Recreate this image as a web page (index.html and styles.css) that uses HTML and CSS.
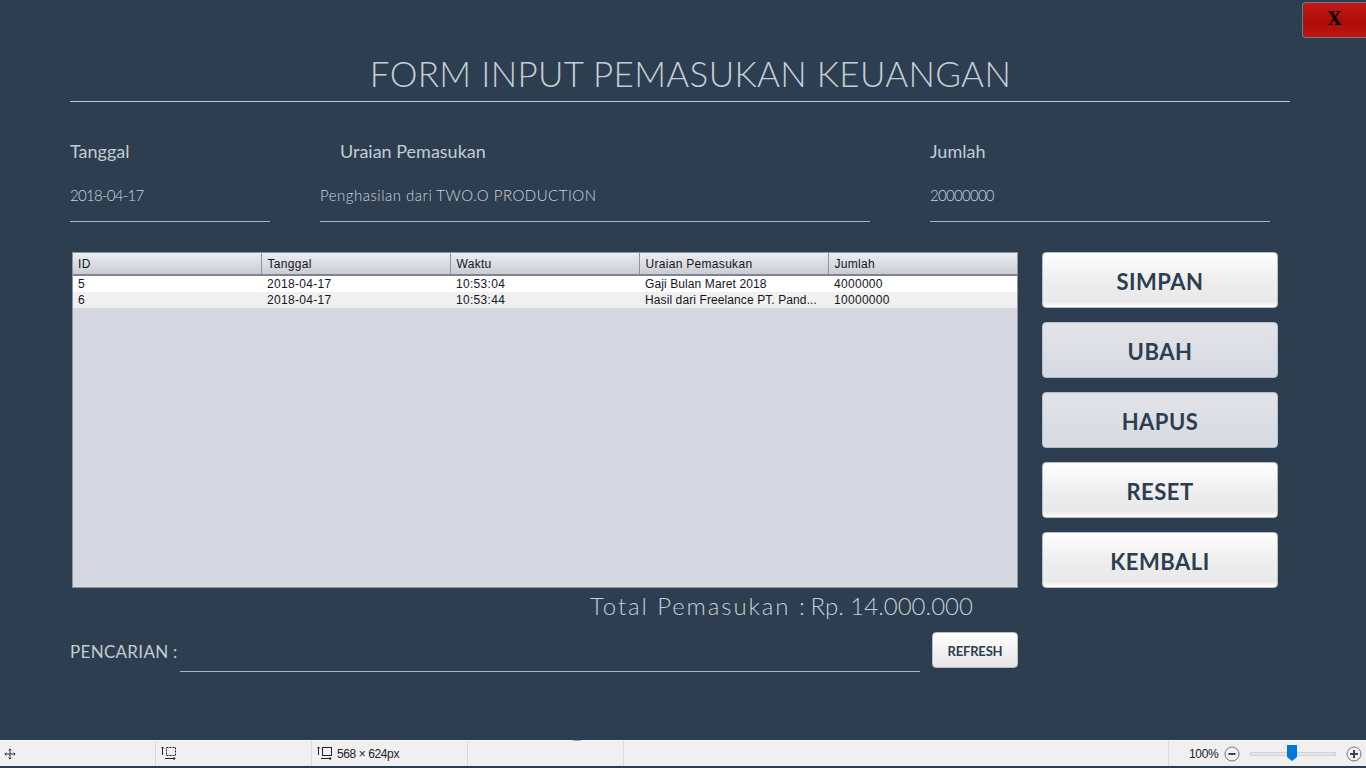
FILE: index.html
```html
<!doctype html>
<html>
<head>
<meta charset="utf-8">
<link rel="stylesheet" href="styles.css">
<title>Form Input Pemasukan Keuangan</title>
</head>
<body>
<div class="form">
    <div class="topbar"><button class="close">X</button></div>
    <h1 class="title">FORM INPUT PEMASUKAN KEUANGAN</h1>

    <div class="fields">
        <div class="field">
            <div class="label">Tanggal</div>
            <div class="value value-num">2018-04-17</div>
        </div>
        <div class="field field-mid">
            <div class="label label-indent">Uraian Pemasukan</div>
            <div class="value value-text">Penghasilan dari TWO.O PRODUCTION</div>
        </div>
        <div class="field">
            <div class="label">Jumlah</div>
            <div class="value value-num">20000000</div>
        </div>
    </div>

    <div class="main">
        <div class="table-box">
            <table class="grid">
                <thead>
                    <tr><th>ID</th><th>Tanggal</th><th>Waktu</th><th>Uraian Pemasukan</th><th>Jumlah</th></tr>
                </thead>
                <tbody>
                    <tr><td>5</td><td>2018-04-17</td><td>10:53:04</td><td>Gaji Bulan Maret 2018</td><td>4000000</td></tr>
                    <tr class="alt"><td>6</td><td>2018-04-17</td><td>10:53:44</td><td>Hasil dari Freelance PT. Pand...</td><td>10000000</td></tr>
                </tbody>
            </table>
        </div>
        <div class="actions">
            <button class="btn">SIMPAN</button>
            <button class="btn btn-hover">UBAH</button>
            <button class="btn btn-hover">HAPUS</button>
            <button class="btn">RESET</button>
            <button class="btn">KEMBALI</button>
        </div>
    </div>

    <div class="total">Total Pemasukan :<span class="total-value">Rp. 14.000.000</span></div>

    <div class="search">
        <div class="search-label">PENCARIAN :</div>
        <div class="search-input"></div>
        <button class="refresh">REFRESH</button>
    </div>
</div>

<div class="status">
    <div class="cell cell-move">
        <svg width="12" height="12" viewBox="0 0 13 13" fill="none" stroke="#222"><path d="M6.500 1v11M1 6.500h11M5 2.500l1.500-1.500 1.500 1.500M5 10.500l1.500 1.500 1.500-1.500M2.500 5l-1.500 1.500 1.500 1.500M10.500 5l1.500 1.500-1.500 1.500"/></svg>
    </div>
    <div class="cell">
        <svg width="16" height="15" viewBox="0 0 16 15" fill="none" stroke="#222"><path d="M1.500 1v8M0 2.500l1.500-1.500 1.500 1.500M4 12.500h10M12.500 11l1.500 1.500-1.500 1.500"/><rect x="5.500" y="1.500" width="9" height="8" stroke-dasharray="2 1"/></svg>
    </div>
    <div class="cell">
        <svg width="16" height="15" viewBox="0 0 16 15" fill="none" stroke="#222"><path d="M1.500 1v8M0 2.500l1.500-1.500 1.500 1.500M4 12.500h10M12.500 11l1.500 1.500-1.500 1.500"/><rect x="5.500" y="1.500" width="9" height="8"/></svg>
        <span class="dim">568 × 624px</span>
    </div>
    <div class="cell cell-mark"></div>
    <div class="cell cell-spacer"></div>
    <div class="zoom">
        <span class="zoom-num">100%</span>
        <svg width="16" height="16" viewBox="0 0 16 16" fill="none" stroke="#777"><circle cx="8" cy="8" r="7"/><path d="M4.500 8h7" stroke="#444" stroke-width="2"/></svg>
        <div class="slider"><svg class="thumb" width="10" height="16" viewBox="0 0 10 16"><path d="M0 0h10v12l-5 4-5-4z" fill="#0078d7"/></svg></div>
        <svg width="16" height="16" viewBox="0 0 16 16" fill="none" stroke="#777"><circle cx="8" cy="8" r="7"/><path d="M4 8h8M8 4v8" stroke="#444" stroke-width="2"/></svg>
    </div>
</div>
</body>
</html>
```

FILE: styles.css
```css
* {
    box-sizing: border-box;
}
body {
    margin: 0;
    width: 1366px;
    height: 768px;
    overflow: hidden;
    background-color: #2d3e50;
    font-family: "Lato", "Liberation Sans", sans-serif;
    color: #bcc6cf;
}
button {
    font-family: "Lato", "Liberation Sans", sans-serif;
    cursor: pointer;
}

.form {
    height: 740px;
    padding: 2px 0 0 70px;
}
.topbar {
    display: flex;
    justify-content: flex-end;
    height: 36px;
}
.close {
    width: 64px;
    height: 36px;
    padding: 0 0 3px;
    border: 1px solid #6c7a86;
    border-right: 0;
    border-radius: 4px 0 0 4px;
    background: linear-gradient(#c41814, #ad0d0a 55%, #c01512);
    font-family: "DejaVu Serif", serif;
    font-size: 18px;
    font-weight: bold;
    color: #0c0505;
}

.title {
    width: 1220px;
    height: 64px;
    margin: 0;
    padding: 11px 0 0 21px;
    border-bottom: 1px solid #bcc6cf;
    font-size: 35px;
    font-weight: 300;
    line-height: 48px;
    letter-spacing: 0.32px;
    text-align: center;
    color: #c5ced6;
}

.fields {
    display: grid;
    grid-template-columns: 200px 560px 340px;
    column-gap: 50px;
    margin-top: 34px;
}
.field-mid {
    margin-right: 10px;
}
.label {
    height: 31px;
    font-size: 18px;
    line-height: 30px;
    color: #c3ccd4;
}
.label-indent {
    padding-left: 20px;
}
.value {
    height: 55px;
    padding-top: 16px;
    border-bottom: 1px solid #aab4be;
    font-size: 15px;
    font-weight: 300;
    line-height: 24px;
    color: #ccd5dc;
}
.value-num {
    letter-spacing: -0.72px;
}
.value-text {
    letter-spacing: 0.5px;
}

.main {
    display: flex;
    margin: 30px 0 0 2px;
}
.table-box {
    width: 946px;
    height: 336px;
    border: 1px solid #8d95a1;
    background-color: #d5d8e1;
}
.grid {
    width: 944px;
    table-layout: fixed;
    border-collapse: collapse;
    font-family: "Liberation Sans", Arial, sans-serif;
    font-size: 12px;
    letter-spacing: 0.3px;
    color: #14141e;
}
.grid th {
    width: 189px;
    height: 22px;
    padding: 0 5px 0 6px;
    border-right: 1px solid #8d95a1;
    border-bottom: 2px solid #7f8590;
    background: linear-gradient(#eceef1, #d3d6dd 70%, #c9ccd4);
    font-weight: normal;
    text-align: left;
}
.grid th:first-child {
    width: 188px;
    padding-left: 5px;
}
.grid td {
    height: 16px;
    padding: 0 5px 0 6px;
    background-color: #fff;
    line-height: 16px;
    white-space: nowrap;
}
.grid td:first-child {
    padding-left: 5px;
}
.grid td:nth-child(4) {
    letter-spacing: 0.1px;
}
.grid .alt td {
    background-color: #f0f0f0;
}

.actions {
    display: flex;
    flex-direction: column;
    gap: 14px;
    margin-left: 24px;
}
.btn {
    width: 236px;
    height: 56px;
    padding: 2px 0 0;
    border: 1px solid #b9bec6;
    border-radius: 4px;
    background: linear-gradient(#fff, #ededed 55%, #e9e9e9 90%, #fff);
    font-size: 22px;
    font-weight: bold;
    letter-spacing: 0.5px;
    color: #2d3e50;
}
.btn-hover {
    background: linear-gradient(#e2e4e9, #d7d9e2);
}

.total {
    height: 37px;
    padding-left: 520px;
    font-size: 24px;
    font-weight: 300;
    line-height: 36px;
    letter-spacing: 1.9px;
    color: #c5ced6;
}
.total-value {
    margin-left: 4px;
    letter-spacing: 0;
}

.search {
    display: flex;
    align-items: flex-start;
    margin-top: 7px;
}
.search-label {
    width: 110px;
    padding-top: 8px;
    font-size: 17px;
    line-height: 24px;
    letter-spacing: 0.3px;
    white-space: nowrap;
    color: #c3ccd4;
}
.search-input {
    width: 740px;
    height: 40px;
    border-bottom: 1px solid #aab4be;
}
.refresh {
    width: 86px;
    height: 36px;
    margin-left: 12px;
    padding: 2px 0 0;
    border: 1px solid #b9bec6;
    border-radius: 4px;
    background: linear-gradient(#fff, #ededed 70%, #e6e6e6);
    font-size: 13px;
    font-weight: bold;
    letter-spacing: -0.2px;
    color: #2d3e50;
}

.status {
    display: flex;
    height: 26px;
    border-top: 1px solid #f8f8f8;
    background-color: #f0f0f0;
    font-family: "Liberation Sans", Arial, sans-serif;
    font-size: 12px;
    color: #222;
}
.cell {
    display: flex;
    align-items: center;
    gap: 4px;
    width: 156px;
    padding-left: 5px;
    border-right: 1px solid #dadada;
}
.cell-move {
    padding-left: 4px;
}
.cell-mark {
    position: relative;
}
.cell-mark::before {
    content: "";
    position: absolute;
    left: 105px;
    top: -1px;
    width: 8px;
    height: 1px;
    background-color: #a0a8b0;
}
.cell-spacer {
    width: 545px;
}
.dim {
    letter-spacing: -0.4px;
}
.zoom {
    display: flex;
    align-items: center;
    flex: 1;
    padding-left: 20px;
}
.zoom-num {
    width: 35px;
    letter-spacing: -0.3px;
}
.slider {
    position: relative;
    width: 86px;
    height: 4px;
    margin: 0 10px;
    border: 1px solid #d2d2d2;
    background-color: #e6e6e6;
}
.thumb {
    position: absolute;
    left: 36px;
    top: -8px;
}
```
